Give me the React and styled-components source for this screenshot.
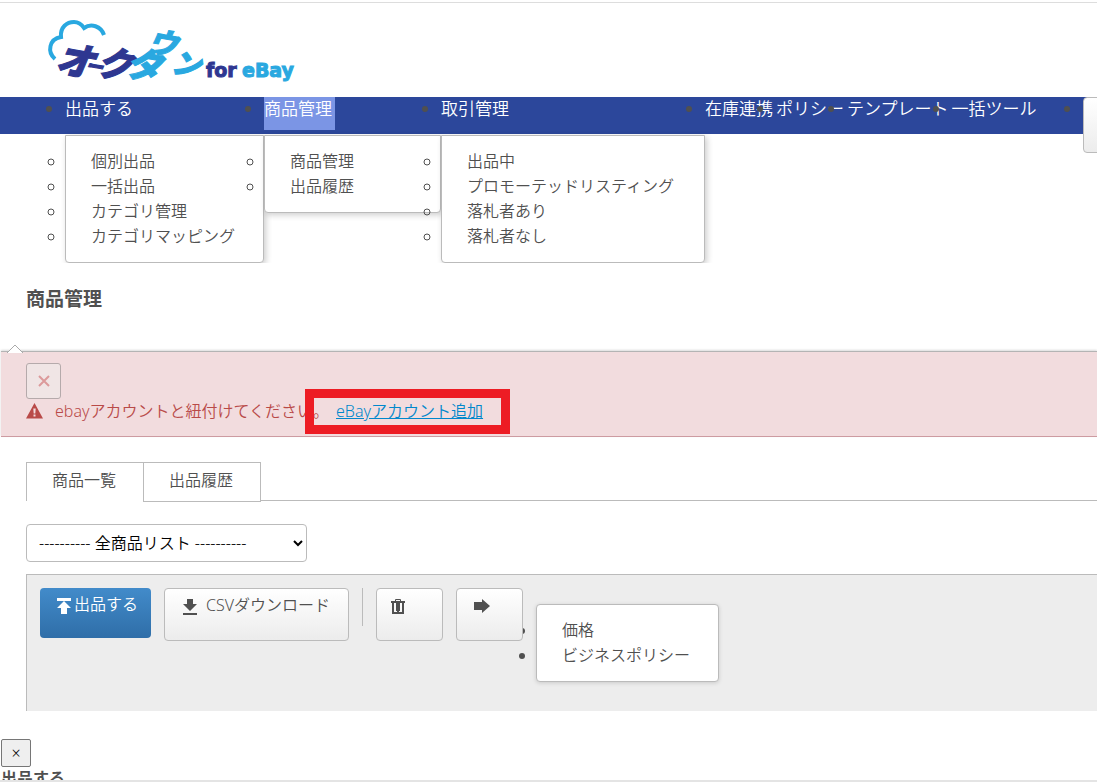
import React from "react";
import styled, { createGlobalStyle } from "styled-components";

const GlobalStyle = createGlobalStyle`
  * {
    box-sizing: border-box;
  }
  body {
    margin: 0;
    overflow: hidden;
    background: #fff;
    color: #505050;
    font-family: "Noto Sans", "Noto Sans CJK JP", sans-serif;
    font-weight: 350;
    font-size: 16px;
    line-height: 25px;
  }
  ul {
    margin: 0;
    padding: 0;
  }
  a {
    color: inherit;
    text-decoration: none;
  }
  button,
  select {
    font: inherit;
    color: inherit;
  }
`;

const Header = styled.header`
  height: 97px;
  margin-top: 2px;
  margin-bottom: -2px;
  border-top: 1px solid #ddd;
  padding: 11px 0 0 46px;
  svg {
    display: block;
  }
`;

const NavList = styled.ul`
  display: flex;
  overflow: hidden;
  padding-left: 65px;
  background: linear-gradient(#2c479b 37px, transparent 37px);
`;

const NavItem = styled.li`
  flex: none;
  list-style: disc;
  min-width: ${props => props.$minWidth || "0"};
  margin-right: ${props => (props.$last ? "43px" : "0")};
  font-size: 17px;
  line-height: 23px;
`;

const NavLink = styled.a`
  display: block;
  width: fit-content;
  height: 33px;
  margin-bottom: 5px;
  padding-right: 3px;
  color: #fff;
  background: ${props => (props.$selected ? "#7b95e5" : "transparent")};
`;

const NavButton = styled.button`
  display: block;
  width: 60px;
  height: 56px;
  border: 1px solid #bbb;
  border-radius: 4px;
  background: linear-gradient(#fff, #ececec);
`;

const Menu = styled.ul`
  padding: 13px 0;
  border: 1px solid #bbb;
  border-radius: ${props => (props.$dropped ? "0 0 4px 4px" : "4px")};
  background: #fff;
  box-shadow: 2px 2px 6px rgba(0, 0, 0, 0.2);
  font-size: 16px;
  line-height: 25px;
  li {
    list-style: ${props => (props.$dropped ? "circle" : "disc")};
  }
  a {
    display: block;
    padding: 0 28px 0 25px;
    white-space: nowrap;
  }
`;

const ToolMenu = styled(Menu)`
  margin-top: 16px;
  box-shadow: 0 1px 4px rgba(0, 0, 0, 0.15);
`;

const PageTitle = styled.h1`
  margin: 0;
  padding: 24px 26px 32px;
  font-size: 19px;
  font-weight: 700;
`;

const Notch = styled.svg`
  display: block;
  position: relative;
  z-index: 1;
  margin: 0 0 -2px 6px;
`;

const Alert = styled.div`
  margin-left: 1px;
  padding: 11px 25px 13px;
  border-top: 1px solid #b4b4b4;
  border-bottom: 1px solid #cd9ba1;
  background: #f2dcde;
  box-shadow: 0 -1px 2px rgba(0, 0, 0, 0.15);
  color: #b94a48;
`;

const AlertClose = styled.button`
  display: flex;
  align-items: center;
  justify-content: center;
  width: 35px;
  height: 36px;
  padding: 0;
  border: 1px solid #b5aaab;
  border-radius: 3px;
  background: #f0e5e5;
`;

const AlertText = styled.p`
  display: flex;
  align-items: center;
  margin: 0;
  line-height: 24px;
  svg {
    margin-right: 12px;
  }
`;

const AccountLink = styled.a`
  position: relative;
  margin-left: 7px;
  color: #0088cc;
  text-decoration: underline;
  /* red frame drawn over the message */
  &::after {
    content: "";
    position: absolute;
    inset: -10px -27px -11px -31px;
    border: 9px solid #ed1c24;
  }
`;

const Content = styled.main`
  padding: 25px 0 0 26px;
`;

const Tabs = styled.div`
  display: flex;
  height: 40px;
  margin-bottom: 22px;
  background: linear-gradient(#bbb, #bbb) left 38px / 100% 1px no-repeat;
`;

const Tab = styled.button`
  height: ${props => (props.$active ? "39px" : "40px")};
  padding: 0 27px 4px 25px;
  border: 1px solid #bbb;
  border-width: ${props => (props.$active ? "1px 0 0 1px" : "1px")};
  background: #fff;
`;

const ListSelect = styled.select`
  display: block;
  width: 281px;
  height: 38px;
  margin-bottom: 12px;
  padding: 0 11px 0 8px;
  border: 1px solid #bbb;
  border-radius: 4px;
  background: #fff;
  color: #000;
`;

const Toolbar = styled.div`
  display: flex;
  align-items: flex-start;
  gap: 13px;
  min-height: 137px;
  padding: 13px;
  border: 1px solid #bbb;
  border-width: 1px 0 0 1px;
  background: #ededed;
`;

const ToolButton = styled.button`
  position: relative;
  z-index: 1;
  display: flex;
  align-items: flex-start;
  gap: 8px;
  flex: none;
  min-width: 67px;
  height: 53px;
  padding: 4px 18px 0 17px;
  border: 1px solid #bbb;
  border-radius: 4px;
  background: linear-gradient(#fff, #ececec);
  svg {
    margin-top: 5px;
  }
`;

const IconButton = styled(ToolButton)`
  padding-left: 13px;
`;

const PrimaryButton = styled(ToolButton)`
  gap: 2px;
  height: 50px;
  padding: 4px 13px 0 16px;
  border: 0;
  background: linear-gradient(#428bca, #2f6ea8);
  color: #fff;
`;

const Divider = styled.span`
  width: 1px;
  height: 38px;
  background: #bbb;
`;

const Dialog = styled.section`
  padding: 28px 0 0 1px;
`;

const DialogClose = styled.button`
  display: block;
  width: 30px;
  height: 28px;
  padding: 0;
  border: 1px solid #767676;
  border-radius: 2px;
  background: #efefef;
  color: #000;
  font-size: 16px;
  line-height: 24px;
`;

const DialogTitle = styled.h2`
  margin: 0;
  font-size: 16px;
  font-weight: 700;
  line-height: 22px;
`;

const BottomEdge = styled.div`
  position: fixed;
  right: 0;
  bottom: 0;
  left: 0;
  height: 2px;
  background: #e4e4e4;
`;

const navItems = [
  { label: "出品する", links: ["個別出品", "一括出品", "カテゴリ管理", "カテゴリマッピング"] },
  {
    label: "商品管理",
    selected: true,
    minWidth: "177px",
    links: ["商品管理", "出品履歴"]
  },
  {
    label: "取引管理",
    minWidth: "264px",
    links: ["出品中", "プロモーテッドリスティング", "落札者あり", "落札者なし"]
  },
  { label: "在庫連携" },
  { label: "ポリシー" },
  { label: "テンプレート" },
  { label: "一括ツール", last: true }
];

function Logo() {
  return (
    <svg width="260" height="76" viewBox="46 14 260 76" role="img" aria-label="オークタウン for eBay">
      <path
        d="M55 59C47 52 49 39 61 37C60 27 67 22 74 22C79 22 82 25 84 28C91 23 101 26 104 35"
        fill="none"
        stroke="#29a8e0"
        strokeWidth="4"
      />
      <g
        fontFamily="Noto Sans CJK JP"
        fontWeight="900"
        fontStyle="italic"
        strokeWidth="1"
      >
        <g fill="#2e3791" stroke="#2e3791">
          <text x="54" y="71" fontSize="38" rotate="10">オ</text>
          <text x="85" y="71" fontSize="17" rotate="10">ー</text>
          <text x="95" y="74" fontSize="36" rotate="10">ク</text>
        </g>
        <g fill="#29a8e0" stroke="#29a8e0">
          <text x="124" y="75" fontSize="36" rotate="10">タ</text>
          <text x="147" y="51" fontSize="29" rotate="10">ウ</text>
          <text x="170" y="72" fontSize="29" rotate="10">ン</text>
        </g>
      </g>
      <g fontFamily="DejaVu Sans" fontWeight="700" fontSize="19">
        <text x="206" y="77" fill="#2e3791" stroke="#2e3791">for</text>
        <text x="242" y="77" fill="#29a8e0" stroke="#29a8e0">eBay</text>
      </g>
    </svg>
  );
}

export default function App() {
  return (
    <>
      <GlobalStyle />
      <Header>
        <Logo />
      </Header>
      <nav>
        <NavList>
          {navItems.map(item => (
            <NavItem key={item.label} $minWidth={item.minWidth} $last={item.last}>
              <NavLink href="#" $selected={item.selected}>
                {item.label}
              </NavLink>
              {item.links && (
                <Menu $dropped>
                  {item.links.map(link => (
                    <li key={link}>
                      <a href="#">{link}</a>
                    </li>
                  ))}
                </Menu>
              )}
            </NavItem>
          ))}
          <NavItem>
            <NavButton type="button" aria-label="アカウント" />
          </NavItem>
        </NavList>
      </nav>
      <PageTitle>商品管理</PageTitle>
      <Notch width="18" height="9" viewBox="0 0 18 9">
        <path d="M1 9L9 1L17 9" fill="#fff" stroke="#aaa" />
      </Notch>
      <Alert>
        <AlertClose type="button" aria-label="閉じる">
          <svg width="12" height="12" viewBox="0 0 12 12">
            <path d="M1 1L11 11M11 1L1 11" stroke="#dc9a9b" strokeWidth="2" />
          </svg>
        </AlertClose>
        <AlertText>
          <svg width="17" height="16" viewBox="0 0 17 16">
            <path
              d="M8.5 0L17 15.500H0ZM7.300 5.500L7.700 10.500H9.300L9.700 5.500ZM7.500 11.500V13.500H9.500V11.500Z"
              fill="#b94a48"
              fillRule="evenodd"
            />
          </svg>
          ebayアカウントと紐付けてください。
          <AccountLink href="#">eBayアカウント追加</AccountLink>
        </AlertText>
      </Alert>
      <Content>
        <Tabs role="tablist">
          <Tab type="button" role="tab" aria-selected="true" $active>
            商品一覧
          </Tab>
          <Tab type="button" role="tab" aria-selected="false">
            出品履歴
          </Tab>
        </Tabs>
        <ListSelect aria-label="商品リスト">
          <option>---------- 全商品リスト ----------</option>
        </ListSelect>
        <Toolbar>
          <PrimaryButton type="button">
            <svg width="16" height="18" viewBox="0 0 16 18">
              <path d="M1 1H15V4H1ZM8 4L15 11H11V17H5V11H1Z" fill="#fff" />
            </svg>
            出品する
          </PrimaryButton>
          <ToolButton type="button">
            <svg width="16" height="18" viewBox="0 0 16 18">
              <path d="M5 1H11V6H15L8 13L1 6H5ZM1 15H15V17H1Z" fill="#505050" />
            </svg>
            CSVダウンロード
          </ToolButton>
          <Divider />
          <IconButton type="button" aria-label="削除">
            <svg width="16" height="18" viewBox="0 0 16 18">
              <path
                d="M5.500 3V1.500H10.500V3M6.500 5V13M9.500 5V13"
                fill="none"
                stroke="#505050"
              />
              <path
                d="M1 3H15V5H1ZM2 5H4V16H2ZM12 5H14V16H12ZM3 14H13V16H3ZM7 5H9V14H7Z"
                fill="#505050"
              />
            </svg>
          </IconButton>
          <ToolButton type="button" aria-label="移動">
            <svg width="16" height="18" viewBox="0 0 16 18">
              <path d="M0 4H8V1L16 8L8 15V12H0Z" fill="#505050" />
            </svg>
          </ToolButton>
          <ToolMenu>
            <li>
              <a href="#">価格</a>
            </li>
            <li>
              <a href="#">ビジネスポリシー</a>
            </li>
          </ToolMenu>
        </Toolbar>
      </Content>
      <Dialog aria-label="出品する">
        <DialogClose type="button">×</DialogClose>
        <DialogTitle>出品する</DialogTitle>
      </Dialog>
      <BottomEdge />
    </>
  );
}
